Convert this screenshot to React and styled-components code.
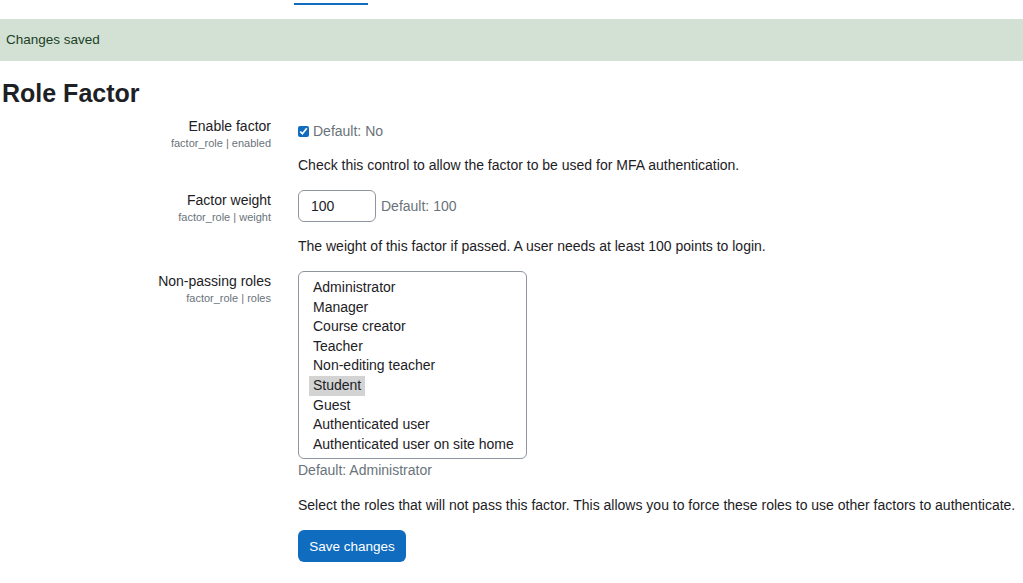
import React from 'react'
import styled, { createGlobalStyle } from 'styled-components'

const GlobalStyle = createGlobalStyle`
  html, body {
    margin: 0;
    padding: 0;
    background: #fff;
  }
  body {
    font-family: "Liberation Sans", Arial, sans-serif;
    font-size: 14px;
    color: #1d2125;
  }
`

const TopBar = styled.div`
  height: 19px;
  box-sizing: border-box;
  padding-top: 3px;
`

const ActiveTab = styled.div`
  margin-left: 294px;
  width: 74px;
  height: 2px;
  background-color: #0f6cbf;
`

const Alert = styled.div`
  background-color: #d2e1d4;
  color: #1c3f26;
  height: 42px;
  line-height: 42px;
  padding-left: 6px;
  font-size: 13.5px;
`

const Heading = styled.h2`
  margin: 16px 0 0 2px;
  font-size: 25px;
  line-height: 32px;
  font-weight: 700;
`

const Row = styled.div`
  display: grid;
  grid-template-columns: 271px 1fr;
  column-gap: 27px;
  margin-top: ${p => p.$gap}px;
`

const LabelCell = styled.div`
  text-align: right;
  padding-top: ${p => p.$top || 0}px;
`

const Label = styled.div`
  font-size: 14px;
  line-height: 18px;
`

const SettingName = styled.div`
  font-size: 11px;
  line-height: 16px;
  color: #6a737b;
`

const ControlCell = styled.div`
  display: flex;
  flex-direction: column;
  align-items: flex-start;
`

const Inline = styled.div`
  display: flex;
  align-items: center;
  gap: ${p => p.$space || 5}px;
  padding-top: ${p => p.$top || 0}px;
  line-height: 20px;
`

const Check = styled.input`
  width: 11px;
  height: 11px;
  margin: 0;
  accent-color: #0f6cbf;
`

const Muted = styled.span`
  color: #6a737b;
  line-height: 20px;
  margin-top: ${p => p.$gap || 0}px;
`

const Description = styled.div`
  margin-top: ${p => p.$gap}px;
  line-height: 20px;
`

const TextInput = styled.input`
  box-sizing: border-box;
  width: 78px;
  height: 32px;
  border: 1px solid #8f959e;
  border-radius: 6px;
  padding: 0 12px;
  font-family: inherit;
  font-size: 14px;
  color: #1d2125;
  outline: none;
`

const Select = styled.div`
  box-sizing: border-box;
  width: 229px;
  height: 188px;
  border: 1px solid #8f959e;
  border-radius: 6px;
  padding: 6px 0 4px 10px;
  overflow: hidden;
`

const Option = styled.div`
  display: table;
  padding: 0 4px;
  line-height: 19.6px;
  white-space: nowrap;
  background: ${p => (p.$selected ? '#d3d3d3' : 'transparent')};
`

const Button = styled.button`
  margin-top: 15px;
  height: 32px;
  width: 108px;
  padding: 0;
  border: none;
  border-radius: 6px;
  background-color: #0f6cbf;
  color: #fff;
  font-family: inherit;
  font-size: 13.5px;
  cursor: pointer;
`

const roles = [
  'Administrator',
  'Manager',
  'Course creator',
  'Teacher',
  'Non-editing teacher',
  'Student',
  'Guest',
  'Authenticated user',
  'Authenticated user on site home',
]

export default function App() {
  return (
    <>
      <GlobalStyle />
      <TopBar>
        <ActiveTab />
      </TopBar>
      <Alert>Changes saved</Alert>
      <Heading>Role Factor</Heading>

      <Row $gap={8}>
        <LabelCell>
          <Label>Enable factor</Label>
          <SettingName>factor_role | enabled</SettingName>
        </LabelCell>
        <ControlCell>
          <Inline $top={4} $space={4}>
            <Check type="checkbox" defaultChecked />
            <Muted>Default: No</Muted>
          </Inline>
          <Description $gap={14}>
            Check this control to allow the factor to be used for MFA authentication.
          </Description>
        </ControlCell>
      </Row>

      <Row $gap={15}>
        <LabelCell $top={1}>
          <Label>Factor weight</Label>
          <SettingName>factor_role | weight</SettingName>
        </LabelCell>
        <ControlCell>
          <Inline>
            <TextInput defaultValue="100" />
            <Muted>Default: 100</Muted>
          </Inline>
          <Description $gap={14}>
            The weight of this factor if passed. A user needs at least 100 points to login.
          </Description>
        </ControlCell>
      </Row>

      <Row $gap={15}>
        <LabelCell $top={1}>
          <Label>Non-passing roles</Label>
          <SettingName>factor_role | roles</SettingName>
        </LabelCell>
        <ControlCell>
          <Select>
            {roles.map(r => (
              <Option key={r} $selected={r === 'Student'}>{r}</Option>
            ))}
          </Select>
          <Muted $gap={1}>Default: Administrator</Muted>
          <Description $gap={15}>
            Select the roles that will not pass this factor. This allows you to force these roles to use other factors to authenticate.
          </Description>
          <Button>Save changes</Button>
        </ControlCell>
      </Row>
    </>
  )
}
